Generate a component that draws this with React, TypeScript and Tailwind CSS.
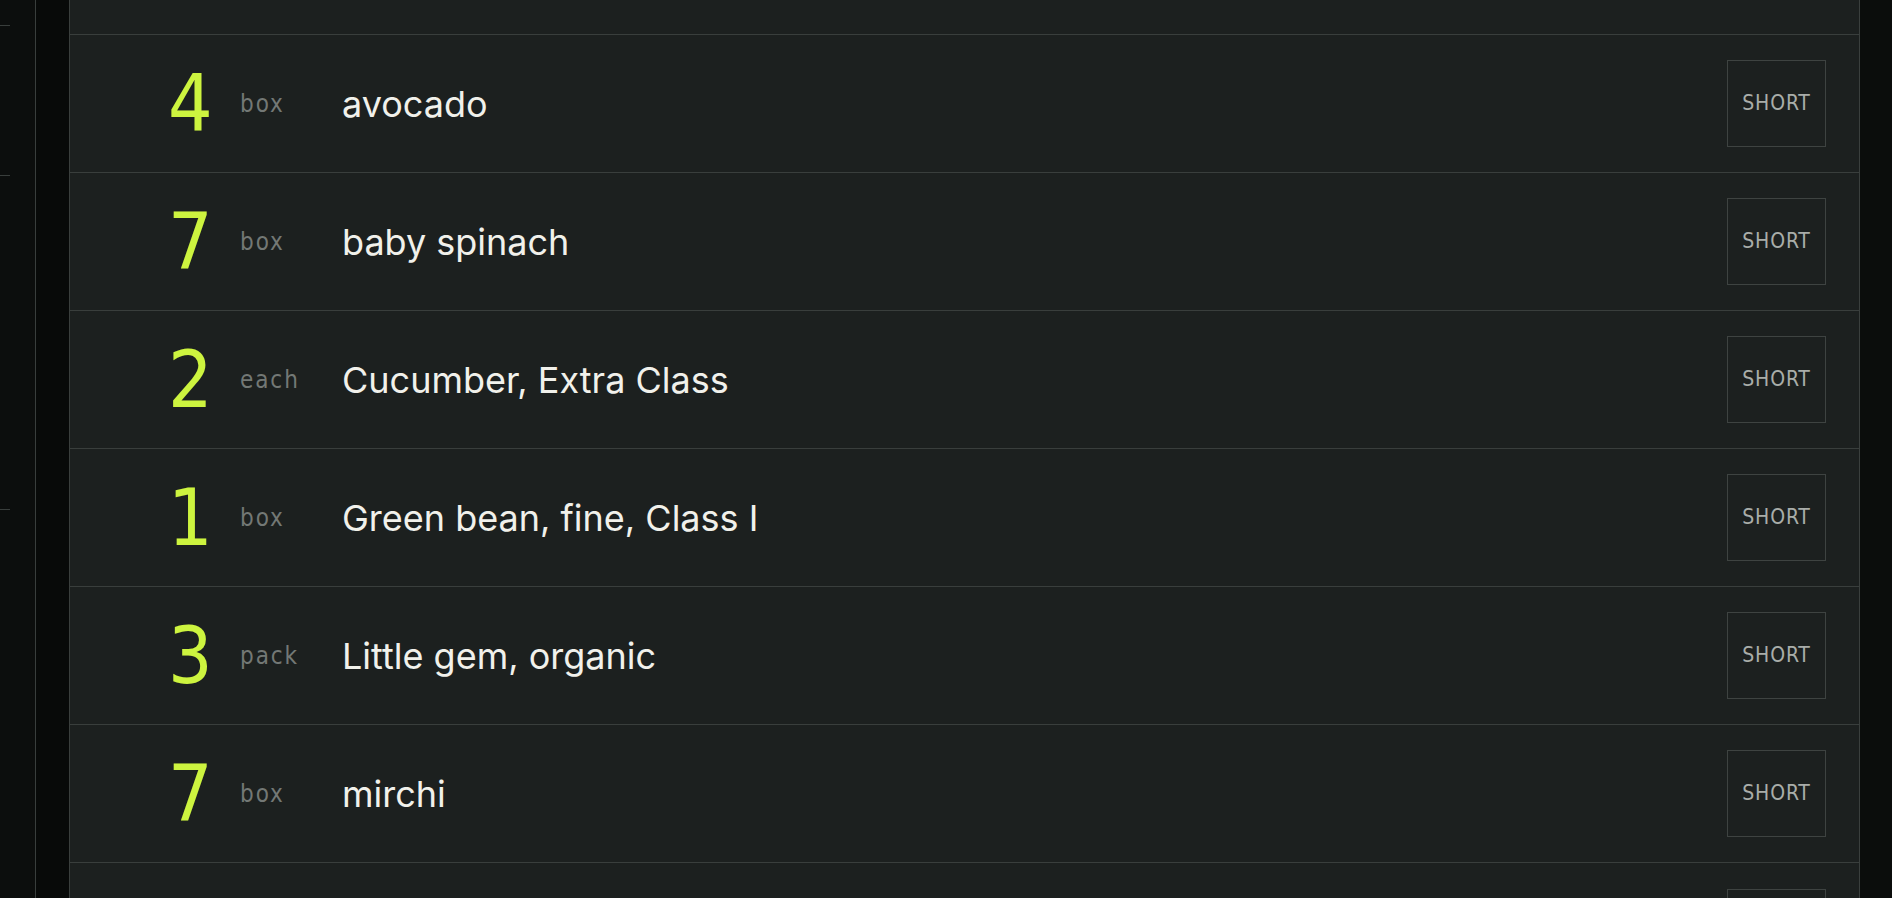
import React from "react";

interface PickItem {
  qty: number;
  unit: string;
  name: string;
}

// Shortage list — each line can be flagged SHORT by the picker.
const items: PickItem[] = [
  { qty: 4, unit: "box", name: "avocado" },
  { qty: 7, unit: "box", name: "baby spinach" },
  { qty: 2, unit: "each", name: "Cucumber, Extra Class" },
  { qty: 1, unit: "box", name: "Green bean, fine, Class I" },
  { qty: 3, unit: "pack", name: "Little gem, organic" },
  { qty: 7, unit: "box", name: "mirchi" }
];

const condensed = "font-['DejaVu_Sans_Condensed','DejaVu_Sans',sans-serif]";
const shortBox = "w-[99px] h-[87px] shrink-0 border border-[#3e4341] flex items-center justify-center";

function PickRow({ item }: { item: PickItem }) {
  return (
    <div className="h-[138px] shrink-0 border-b border-[#393e3c] flex items-center pl-[98px] pr-[33px]">
      <span className={`w-[72px] text-[78px] leading-none text-[#cdf43f] ${condensed}`}>
        {item.qty}
      </span>
      <span className={`w-[102px] text-[24px] leading-none tracking-[0.08em] text-[#737875] ${condensed}`}>
        {item.unit}
      </span>
      <span className="flex-1 text-[36px] leading-none text-[#f1f1eb] font-['Inter',sans-serif]">
        {item.name}
      </span>
      <button
        type="button"
        className={`${shortBox} text-[21px] tracking-[0.04em] text-[#a9ada9] ${condensed}`}
      >
        SHORT
      </button>
    </div>
  );
}

export default function App() {
  return (
    <div className="h-[898px] w-full overflow-hidden flex bg-[#0c0e0d]">
      <div className="w-[35px] shrink-0 flex flex-col">
        <div className="mt-[25px] h-px w-[10px] bg-[#393e3c]" />
        <div className="mt-[149px] h-px w-[10px] bg-[#393e3c]" />
        <div className="mt-[333px] h-px w-[10px] bg-[#393e3c]" />
      </div>
      <div className="w-[34px] shrink-0 border-l border-[#393e3c] bg-[#080a09]" />
      <div className="flex-1 flex flex-col border-x border-[#3a3f3d] bg-[#1c201f]">
        <div className="h-[35px] shrink-0 border-b border-[#393e3c]" />
        {items.map((item, i) => (
          <PickRow key={i} item={item} />
        ))}
        {/* next row, scrolled below the fold */}
        <div className="h-[138px] shrink-0 flex items-center justify-end pr-[33px]">
          <div className={shortBox} />
        </div>
      </div>
      <div className="w-[32px] shrink-0 bg-[#0b0d0c]" />
    </div>
  );
}
